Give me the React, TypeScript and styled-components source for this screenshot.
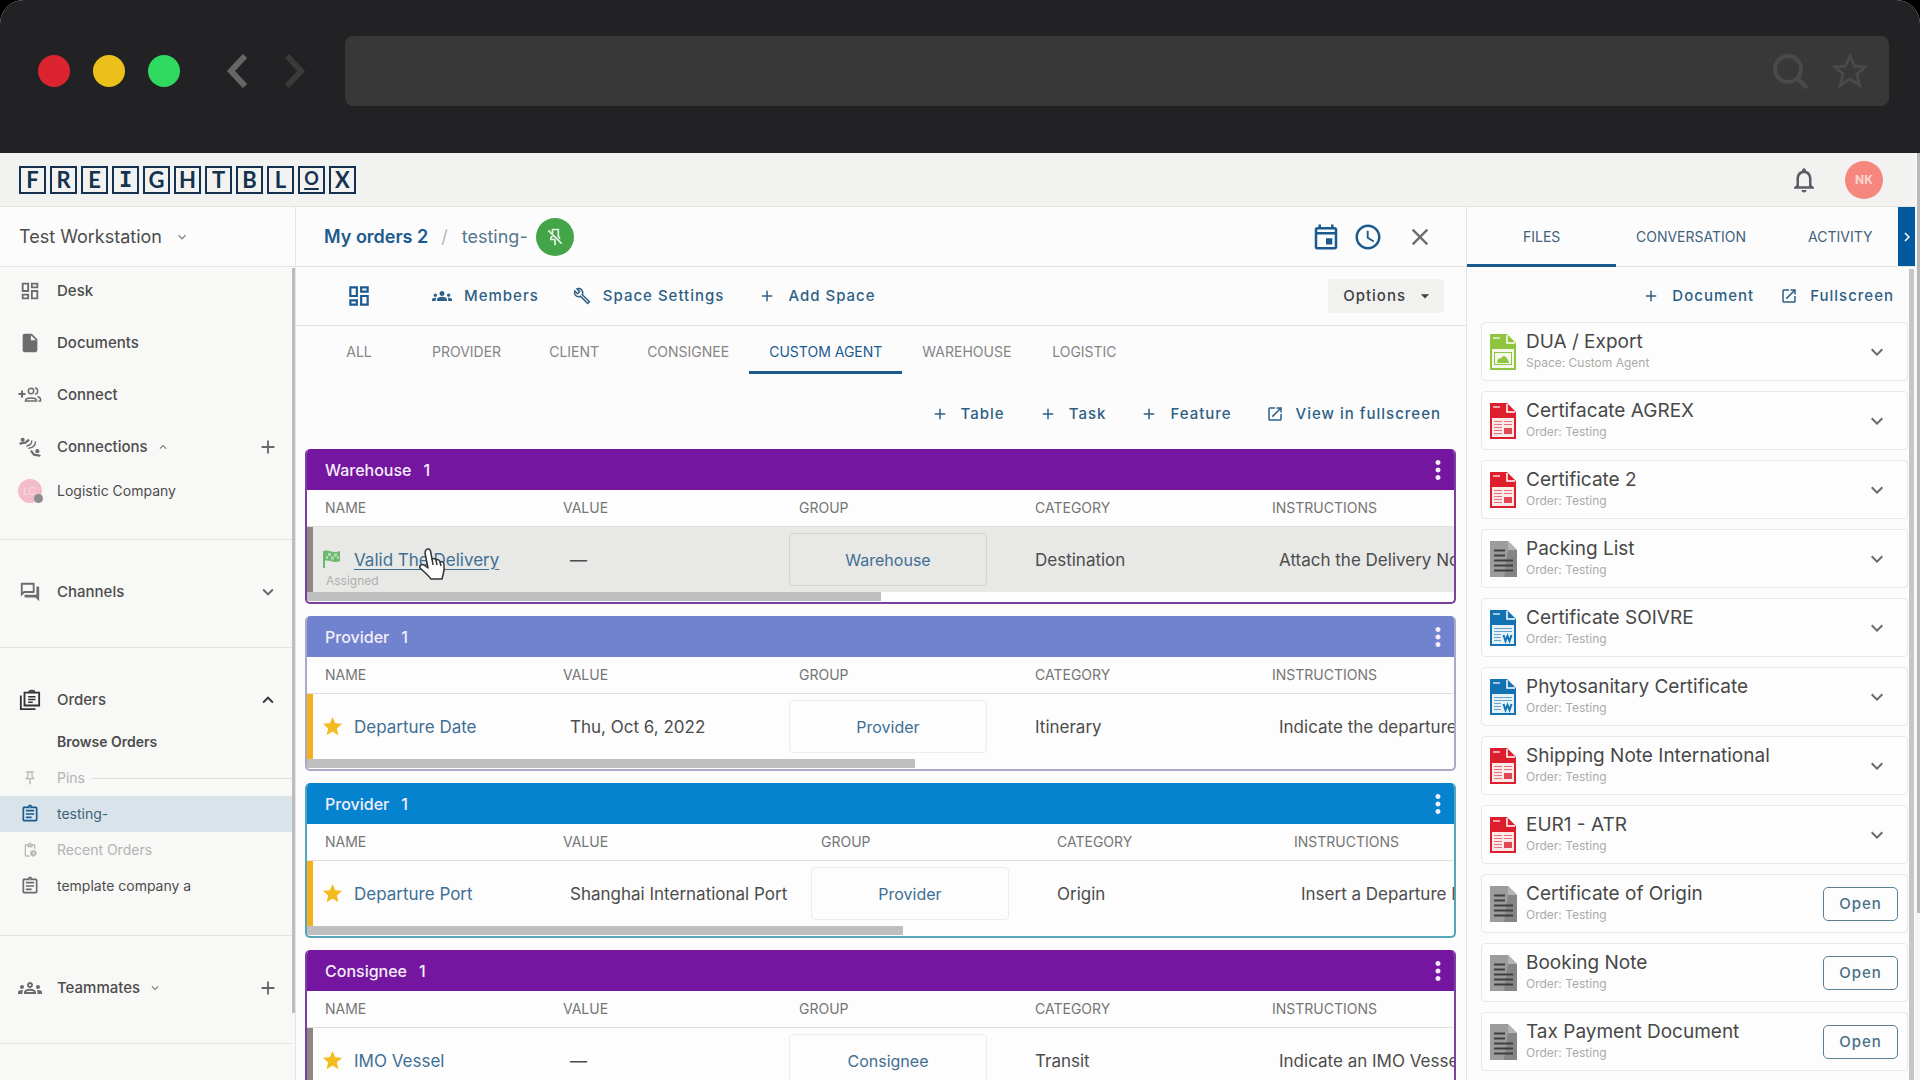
import React from "react";
import styled, { createGlobalStyle, css } from "styled-components";
import {
  MdAccessTime,
  MdAdd,
  MdArrowDropDown,
  MdClose,
  MdExpandLess,
  MdExpandMore,
  MdChevronRight,
  MdGroups,
  MdInsertDriveFile,
  MdMoreVert,
  MdOpenInNew,
  MdOutlineAssignment,
  MdOutlineBuild,
  MdOutlineDashboard,
  MdOutlineEvent,
  MdOutlineForum,
  MdOutlineGroups,
  MdOutlineNotifications,
  MdOutlinePendingActions,
  MdOutlinePushPin,
  MdStar,
} from "react-icons/md";

const blue = "#1a5a8e";
const navy = "#14324f";
const ink = "#4c4c4c";
const line = "#e4e4e0";

const Global = createGlobalStyle`
  *, *::before, *::after { box-sizing: border-box; }
  body {
    margin: 0;
    background: #000;
    color: ${ink};
    font-family: Inter, Roboto, "Liberation Sans", sans-serif;
    font-size: 14px;
    line-height: 20px;
  }
  button { font: inherit; color: inherit; background: none; border: 0; padding: 0; cursor: pointer; }
  a { color: inherit; text-decoration: none; }
  svg { display: block; flex: none; }
`;

const Window = styled.div`
  height: 100vh;
  display: flex;
  flex-direction: column;
  overflow: hidden;
  border-radius: 24px 24px 0 0;
  background: #fcfcfc;
`;

const Chrome = styled.div`
  flex: none;
  display: flex;
  align-items: center;
  height: 153px;
  padding: 0 31px 11px 38px;
  background: #222225;
`;

const Lights = styled.div`
  display: flex;
  gap: 23px;
`;

const Light = styled.span<{ $color: string }>`
  width: 32px;
  height: 32px;
  border-radius: 50%;
  background: ${(p) => p.$color};
`;

const History = styled.div`
  display: flex;
  gap: 36px;
  margin: 0 39px 0 46px;
`;

const AddressBar = styled.div`
  flex: 1;
  display: flex;
  align-items: center;
  height: 70px;
  padding-right: 20px;
  border-radius: 8px;
  background: #383838;
`;

const Address = styled.input`
  flex: 1;
  height: 100%;
  padding: 0 20px;
  border: 0;
  outline: 0;
  background: none;
  color: #bbb;
  font: inherit;
`;

const AddressIcons = styled.div`
  display: flex;
  gap: 22px;
  color: #4b4a48;
`;

const Viewport = styled.div`
  flex: 1;
  min-height: 0;
  display: flex;
`;

const Page = styled.div`
  flex: 1;
  min-width: 0;
  display: flex;
  flex-direction: column;
`;

const PageScroll = styled.div`
  flex: none;
  width: 5px;
  padding-left: 2px;
  background: #f6f6f6;
`;

const PageThumb = styled.div`
  height: 82%;
  background: #b9b9b9;
`;

const TopBar = styled.header`
  flex: none;
  display: flex;
  align-items: center;
  justify-content: space-between;
  height: 54px;
  padding: 0 32px 0 19px;
  background: #f2f2f1;
  border-bottom: 1px solid ${line};
`;

const Logo = styled.a`
  display: flex;
  gap: 4px;
`;

const LogoTile = styled.span<{ $slab?: boolean; $ring?: boolean }>`
  display: flex;
  align-items: center;
  justify-content: center;
  width: 27px;
  height: 28px;
  border: 2px solid ${navy};
  color: ${navy};
  font-family: ${(p) => (p.$slab ? '"DejaVu Sans Mono", monospace' : "Lato, sans-serif")};
  font-weight: 700;
  font-size: 22px;
  line-height: 24px;
  ${(p) =>
    p.$ring &&
    css`
      align-items: flex-start;
      font-size: 18px;
      line-height: 20px;
      text-decoration: underline;
      text-decoration-thickness: 2px;
      text-underline-offset: 3px;
    `}
`;

const TopActions = styled.div`
  display: flex;
  align-items: center;
  gap: 26px;
`;

const Avatar = styled.span`
  display: flex;
  align-items: center;
  justify-content: center;
  width: 38px;
  height: 38px;
  border-radius: 50%;
  background: #f5877f;
  color: #fbd5d0;
  font-size: 12px;
  font-weight: 700;
`;

const Columns = styled.div`
  flex: 1;
  min-height: 0;
  display: flex;
`;

const Sidebar = styled.nav`
  flex: none;
  width: 296px;
  display: flex;
  flex-direction: column;
  border-right: 1px solid ${line};
`;

const Workspace = styled.button`
  flex: none;
  display: flex;
  align-items: center;
  gap: 12px;
  height: 60px;
  padding: 0 20px 0 19px;
  border-bottom: 1px solid ${line};
  font-size: 18px;
  line-height: 24px;
`;

const SideBody = styled.div`
  flex: 1;
  min-height: 0;
  display: flex;
  background: #f8f8f7;
`;

const SideList = styled.div`
  flex: 1;
  display: flex;
  flex-direction: column;
`;

const SideThumb = styled.div`
  flex: none;
  width: 3px;
  height: 745px;
  margin-top: 1px;
  background: #bdbdbd;
`;

const Section = styled.section<{ $first?: boolean }>`
  display: flex;
  flex-direction: column;
  gap: ${(p) => (p.$first ? "4px" : "0")};
  padding: ${(p) => (p.$first ? "0 0 32px" : "28px 0 31px")};
  border-bottom: 1px solid ${line};
`;

const SideRow = styled.div<{ $tall?: boolean; $short?: boolean; $active?: boolean; $muted?: boolean }>`
  display: flex;
  align-items: center;
  height: ${(p) => (p.$tall ? "48px" : p.$short ? "32px" : "36px")};
  padding-right: 13px;
  background: ${(p) => (p.$active ? "#d9e4ea" : "none")};
  color: ${(p) => (p.$active ? "#3c6478" : p.$muted ? "#b3b3b1" : ink)};
`;

const SideIcon = styled.span`
  flex: none;
  display: flex;
  justify-content: center;
  width: 57px;
  padding-left: 2px;
  color: #6b6b6b;
  ${SideRow}[data-tone="active"] & { color: ${blue}; }
  ${SideRow}[data-tone="muted"] & { color: #b9b9b7; }
  ${SideRow}[data-tone="dark"] & { color: #333; }
`;

const SideLink = styled.a<{ $weight?: number; $size?: number }>`
  font-size: ${(p) => p.$size ?? 14}px;
  font-weight: ${(p) => p.$weight ?? 400};
`;

const SideCaret = styled.span`
  margin-left: 8px;
  color: #777;
`;

const SideButton = styled.button`
  margin-left: auto;
  color: #666;
`;

const Rule = styled.span`
  flex: 1;
  height: 1px;
  margin: 0 -13px 0 6px;
  background: #dfdfdc;
`;

const CompanyMark = styled.span`
  position: relative;
  width: 24px;
  height: 24px;
  border-radius: 50%;
  background: #f3bcc8;
  color: #f7dbe2;
  font-size: 10px;
  line-height: 24px;
  text-align: center;
  &::after {
    content: "";
    position: absolute;
    right: -1px;
    bottom: 0;
    width: 9px;
    height: 9px;
    border-radius: 50%;
    background: #8d8d8d;
  }
`;

const Main = styled.main`
  flex: 1;
  min-width: 0;
  display: flex;
  flex-direction: column;
`;

const Crumbs = styled.div`
  flex: none;
  display: flex;
  align-items: center;
  height: 60px;
  padding: 0 32px 0 28px;
  border-bottom: 1px solid ${line};
  font-size: 18px;
  line-height: 24px;
  color: #57778f;
`;

const CrumbHome = styled.a`
  font-weight: 600;
  color: ${blue};
`;

const Slash = styled.span`
  margin: 0 14px 0 13px;
  color: #b5b5b5;
`;

const PinButton = styled.button`
  display: flex;
  align-items: center;
  justify-content: center;
  width: 38px;
  height: 38px;
  margin-left: 8px;
  border-radius: 50%;
  background: #43a548;
`;

const CrumbActions = styled.div`
  display: flex;
  align-items: center;
  gap: 12px;
  margin-left: auto;
  color: ${blue};
`;

const CloseButton = styled.button`
  margin-left: 11px;
  color: #6d6d6d;
`;

const Toolbar = styled.div`
  flex: none;
  display: flex;
  align-items: center;
  gap: 34px;
  height: 59px;
  padding: 0 22px 0 50px;
  border-bottom: 1px solid ${line};
`;

const HomeButton = styled.button`
  margin-right: 26px;
  color: ${blue};
`;

const TextButton = styled.button`
  display: flex;
  align-items: center;
  gap: 12px;
  color: #2e5f85;
  font-size: 15px;
  font-weight: 500;
  letter-spacing: 1px;
  white-space: nowrap;
`;

const OptionsButton = styled.button`
  display: flex;
  align-items: center;
  gap: 9px;
  height: 34px;
  margin-left: auto;
  padding: 0 9px 0 15px;
  border-radius: 4px;
  background: #f1f1ef;
  font-size: 15px;
  font-weight: 500;
  letter-spacing: 1px;
  color: #3f3f3f;
`;

const Tabs = styled.div`
  flex: none;
  display: flex;
  padding-left: 10px;
`;

const Tab = styled.button<{ $on?: boolean }>`
  min-width: 106px;
  height: 48px;
  padding: 6px 20px 0;
  border-bottom: 3px solid ${(p) => (p.$on ? blue : "transparent")};
  color: ${(p) => (p.$on ? blue : "#858585")};
`;

const Actions = styled.div`
  flex: none;
  display: flex;
  justify-content: flex-end;
  gap: 34px;
  padding: 30px 25px 25px;
`;

const Cards = styled.div`
  flex: 1;
  min-height: 0;
  overflow: hidden;
  display: flex;
  flex-direction: column;
  gap: 12px;
  padding: 0 10px 0 9px;
`;

const Card = styled.section<{ $edge: string }>`
  flex: none;
  border: 2px solid ${(p) => p.$edge};
  border-top: 0;
  border-radius: 5px;
  overflow: hidden;
  background: #fdfdfd;
`;

const CardHead = styled.div<{ $color: string }>`
  display: flex;
  align-items: center;
  height: 41px;
  margin: 0 -2px;
  padding: 0 3px 0 20px;
  background: ${(p) => p.$color};
  color: #f4eefa;
`;

const CardTitle = styled.h2`
  margin: 0 12px 0 0;
  font-size: 16px;
  font-weight: 500;
`;

const CardCount = styled.span`
  font-size: 16px;
  font-weight: 500;
`;

const MoreButton = styled.button`
  margin-left: auto;
`;

const TableClip = styled.div`
  overflow: hidden;
`;

const Table = styled.table`
  table-layout: fixed;
  width: 200%;
  border-collapse: separate;
  border-spacing: 0;
`;

const Col = styled.col<{ $w?: number }>`
  width: ${(p) => (p.$w ? `${p.$w}px` : "auto")};
`;

const Th = styled.th`
  height: 37px;
  padding: 0 18px;
  border-bottom: 1px solid #dededb;
  color: #757575;
  font-weight: 400;
  text-align: left;
`;

const Td = styled.td<{ $inset?: boolean }>`
  height: 65px;
  padding: 0 0 0 ${(p) => (p.$inset ? 25 : 18)}px;
  font-size: 17px;
  white-space: nowrap;
`;

const BodyRow = styled.tr<{ $hover?: boolean }>`
  background: ${(p) => (p.$hover ? "#e8e8e6" : "none")};
`;

const NameTd = styled.td<{ $strip: string }>`
  position: relative;
  height: 65px;
  padding: 0 0 0 8px;
  border-left: 6px solid ${(p) => p.$strip};
  font-size: 17px;
`;

const NameGrid = styled.div`
  height: 65px;
  display: grid;
  grid-template-rows: 1fr auto 1fr;
`;

const NameLine = styled.div`
  grid-row: 2;
  display: flex;
  align-items: center;
  gap: 10px;
`;

const NameLink = styled.a<{ $under?: boolean }>`
  color: #3f6f94;
  white-space: nowrap;
  text-decoration: ${(p) => (p.$under ? "underline" : "none")};
  text-underline-offset: 3px;
`;

const Note = styled.span`
  grid-row: 3;
  padding-left: 5px;
  font-size: 12px;
  line-height: 20px;
  color: #b0b0ae;
`;

const Hand = styled.svg`
  position: absolute;
  left: 104px;
  top: 20px;
`;

const GroupBox = styled.div<{ $hover?: boolean }>`
  display: flex;
  align-items: center;
  justify-content: center;
  width: 198px;
  height: 53px;
  margin-left: -10px;
  border: 1px solid ${(p) => (p.$hover ? "#d3d3d0" : "#ededea")};
  border-radius: 4px;
  font-size: 16px;
  color: #3f6f94;
`;

const Track = styled.div`
  height: 10px;
`;

const Thumb = styled.div`
  height: 9px;
  background: #bfbfbf;
`;

const Files = styled.aside`
  flex: none;
  width: 449px;
  display: flex;
  flex-direction: column;
  border-left: 1px solid ${line};
`;

const FileTabs = styled.div`
  position: relative;
  flex: none;
  display: flex;
  height: 60px;
  border-bottom: 1px solid ${line};
`;

const FileTab = styled.button<{ $on?: boolean }>`
  flex: 1 1 0;
  padding-top: 2px;
  margin-bottom: -1px;
  border-bottom: 3px solid ${(p) => (p.$on ? blue : "transparent")};
  color: #42627c;
`;

const Collapse = styled.button`
  position: absolute;
  right: 0;
  top: 0;
  display: flex;
  align-items: center;
  justify-content: center;
  width: 17px;
  height: 59px;
  background: #015a9f;
  color: #fff;
`;

const FileBody = styled.div`
  flex: 1;
  min-height: 0;
  display: flex;
`;

const FileScroll = styled.div`
  flex: none;
  width: 5px;
  margin: 2px 1px 0 0;
  background: #c6c6c6;
`;

const FileMain = styled.div`
  flex: 1;
  min-width: 0;
  overflow: hidden;
`;

const FileActions = styled.div`
  display: flex;
  justify-content: flex-end;
  gap: 26px;
  padding: 19px 15px 16px;
`;

const FileList = styled.ul`
  display: flex;
  flex-direction: column;
  gap: 10px;
  margin: 0;
  padding: 0 1px 0 14px;
  list-style: none;
`;

const FileRow = styled.li`
  flex: none;
  display: flex;
  align-items: center;
  gap: 9px;
  height: 59px;
  padding: 0 9px 0 8px;
  border: 1px solid #e8e8e4;
  border-radius: 4px;
  background: #fdfdfd;
`;

const FileText = styled.div`
  flex: 1;
  min-width: 0;
  padding-bottom: 2px;
`;

const FileName = styled.div`
  font-size: 19px;
  line-height: 24px;
  color: #484848;
`;

const FileSub = styled.div`
  font-size: 12px;
  line-height: 18px;
  color: #ababa9;
`;

const ExpandButton = styled.button`
  margin-right: 9px;
  color: #6a6a6a;
`;

const OpenButton = styled.button`
  width: 75px;
  height: 34px;
  border: 1px solid #5a7f95;
  border-radius: 5px;
  color: #4a6f88;
  font-size: 15px;
  font-weight: 500;
  letter-spacing: 1px;
`;

type Kind = "pdf" | "doc" | "img" | "text";

const kindColor: Record<Kind, string> = {
  pdf: "#dd1f2d",
  doc: "#1272b4",
  img: "#8fc43f",
  text: "#777",
};

function FileIcon({ kind }: { kind: Kind }) {
  const c = kindColor[kind];
  if (kind === "text") {
    return (
      <svg width="27" height="36" viewBox="0 0 27 36" aria-hidden="true">
        <path d="M0 0H18L27 9V36H0Z" fill="#9c9c9c" />
        <path d="M18 9H27V36H14Z" fill="#858585" />
        <path d="M18 0L27 9H18Z" fill="#b4b4b4" />
        <path d="M4 9.500H15M4 14.500H15M4 19.500H23M4 24.500H23M4 29.500H23" stroke="#3f3f3f" strokeWidth="2" />
      </svg>
    );
  }
  return (
    <svg width="27" height="36" viewBox="0 0 27 36" aria-hidden="true">
      <path d="M0 0H17L26 9V36H0Z" fill={c} />
      <path d="M17 1V9H25" fill="none" stroke="#fff" strokeWidth="1.500" />
      <path d="M3 4H10" stroke="#fff" strokeWidth="2" opacity="0.6" />
      <rect x="2" y="15" width="22" height="19" fill="#fff" opacity="0.9" />
      {kind === "img" && (
        <g>
          <rect x="4.500" y="18.500" width="17" height="12" fill="none" stroke={c} />
          <path d="M7 29C8 22 11 26 13 22C16 22 18 25 19 29Z" fill={c} />
        </g>
      )}
      {kind === "pdf" && (
        <g stroke={c} opacity="0.8">
          <path d="M4 18.500H12M4 21.500H12M4 24.500H12M4 27.500H12M4 30.500H12M14 18.500H22M14 21.500H22" opacity="0.75" />
          <rect x="14.500" y="25.500" width="7" height="5" fill={c} />
        </g>
      )}
      {kind === "doc" && (
        <g stroke={c} fill="none">
          <path d="M4 18.500H22M4 21.500H22M4 24.500H11M4 27.500H11M4 30.500H11" opacity="0.6" />
          <path d="M13.500 25L15.500 31L17.500 26L19.500 31L21.500 25" strokeWidth="2" />
        </g>
      )}
    </svg>
  );
}

function ConnectIcon() {
  return (
    <svg width="24" height="24" viewBox="0 0 24 24" fill="none" stroke="currentColor" strokeWidth="1.500" aria-hidden="true">
      <path d="M4 7.500V14.500M0.500 11H7.500" strokeWidth="2" />
      <circle cx="13" cy="8" r="2.700" />
      <path d="M7.500 17.500C7.500 14 18.500 14 18.500 17.500V18H7.500Z" />
      <path d="M17 5C20.500 4.500 20.500 11.500 17 11M19.500 13.500C22 14.200 23 15.500 22.500 18H20.500" />
    </svg>
  );
}

function ConnectionIcon() {
  return (
    <svg width="22" height="22" viewBox="0 0 24 24" fill="none" stroke="currentColor" aria-hidden="true">
      <circle cx="4" cy="4" r="2.200" fill="currentColor" stroke="none" />
      <path d="M1 9C3 6 6 9 8 6.500L11 4" strokeWidth="2.500" />
      <circle cx="20" cy="16.500" r="2.200" fill="currentColor" stroke="none" />
      <path d="M23 22C21 19.500 18 22 16 20L13 16" strokeWidth="2.500" />
      <path d="M14 5C14 9 12 10 8 11M18 6C18 11 15 13 10 13.500" strokeWidth="1.500" />
    </svg>
  );
}

function OrdersIcon() {
  return (
    <svg width="22" height="22" viewBox="0 0 24 24" fill="none" stroke="currentColor" strokeWidth="2" aria-hidden="true">
      <path d="M6 4H22V18H6Z" />
      <path d="M2 7V22H18" />
      <path d="M11 4C11 1 17 1 17 4" />
      <path d="M10 8.500H18M10 11.500H18M10 14.500H15" strokeWidth="1.500" />
    </svg>
  );
}

function PinOffIcon() {
  return (
    <svg width="20" height="20" viewBox="0 0 24 24" fill="none" stroke="#e6f4e6" strokeWidth="2" aria-hidden="true">
      <path d="M8 3H17M9 3V8M16 3V11L18 14M12 15H7V13L9 11M12 15V22" />
      <path d="M4 4L20 20" />
    </svg>
  );
}

function RaceFlag() {
  return (
    <svg width="23" height="23" viewBox="0 0 23 23" aria-hidden="true">
      <path d="M3 3V20" stroke="#6dba6f" strokeWidth="2" />
      <path d="M3 3C8 1 11 6 19 3V13C12 16 9 11 3 13Z" fill="#6dba6f" />
      <path d="M7 5H10V8H7ZM13 5.500H16V8.500H13ZM10 8.500H13V11.500H10ZM16 8.500H18V11H16ZM5 8H7V11H5Z" fill="#b4dab3" />
    </svg>
  );
}

function HandCursor() {
  return (
    <Hand width="30" height="36" viewBox="0 0 30 36" aria-hidden="true">
      <path
        d="M9 3C11 1 13 2 13.500 4L15 12C17 11 18.500 12 19 13C21 12 22.500 13 23 15C25 14 27 15 27 18C28 24 26 27 25 32H14C11 28 6 24 3 21C2 18 5 17 7 18L11 21L8 6C8 5 8 4 9 3Z"
        fill="#fdfdfd"
        stroke="#333"
        strokeWidth="1.500"
        strokeLinejoin="round"
      />
      <path d="M15 12L16 18M19 13L20 18M23 15L24 19" stroke="#333" strokeWidth="1.500" fill="none" />
    </Hand>
  );
}

const cards = [
  {
    title: "Warehouse", color: "#74169f", edge: "#7b3fa0", strip: "#8f8583", name: "Valid The Delivery", value: "—",
    group: "Warehouse", category: "Destination", instructions: "Attach the Delivery No", thumb: 50, hover: true, valueCol: 236,
  },
  {
    title: "Provider", color: "#7183cf", edge: "#a9a9c9", strip: "#f5b01c", name: "Departure Date", value: "Thu, Oct 6, 2022",
    group: "Provider", category: "Itinerary", instructions: "Indicate the departure", thumb: 53, valueCol: 236,
  },
  {
    title: "Provider", color: "#0683cf", edge: "#56a5b8", strip: "#f5b01c", name: "Departure Port", value: "Shanghai International Port",
    group: "Provider", category: "Origin", instructions: "Insert a Departure P", thumb: 52, valueCol: 258,
  },
  {
    title: "Consignee", color: "#74169f", edge: "#7b3fa0", strip: "#8f8583", name: "IMO Vessel", value: "—",
    group: "Consignee", category: "Transit", instructions: "Indicate an IMO Vesse", thumb: 50, valueCol: 236,
  },
];

const files: { name: string; sub?: string; kind: Kind; open?: boolean }[] = [
  { name: "DUA / Export", sub: "Space: Custom Agent", kind: "img" },
  { name: "Certifacate AGREX", kind: "pdf" },
  { name: "Certificate 2", kind: "pdf" },
  { name: "Packing List", kind: "text" },
  { name: "Certificate SOIVRE", kind: "doc" },
  { name: "Phytosanitary Certificate", kind: "doc" },
  { name: "Shipping Note International", kind: "pdf" },
  { name: "EUR1 - ATR", kind: "pdf" },
  { name: "Certificate of Origin", kind: "text", open: true },
  { name: "Booking Note", kind: "text", open: true },
  { name: "Tax Payment Document", kind: "text", open: true },
];

const tabs = ["ALL", "PROVIDER", "CLIENT", "CONSIGNEE", "CUSTOM AGENT", "WAREHOUSE", "LOGISTIC"];

export default function App() {
  return (
    <>
      <Global />
      <Window>
        <Chrome>
          <Lights>
            <Light $color="#dc2430" />
            <Light $color="#ecc01a" />
            <Light $color="#30d95f" />
          </Lights>
          <History>
            <button aria-label="Back">
              <svg width="22" height="34" viewBox="0 0 22 34" fill="none" stroke="#666" strokeWidth="6">
                <path d="M19 2L5 17L19 32" />
              </svg>
            </button>
            <button aria-label="Forward">
              <svg width="22" height="34" viewBox="0 0 22 34" fill="none" stroke="#3a3a3a" strokeWidth="6">
                <path d="M3 2L17 17L3 32" />
              </svg>
            </button>
          </History>
          <AddressBar>
            <Address type="text" aria-label="Address" />
            <AddressIcons>
              <svg width="38" height="38" viewBox="0 0 38 38" fill="none" stroke="currentColor" strokeWidth="4">
                <circle cx="17" cy="17" r="13" />
                <path d="M26 26L36 36" />
              </svg>
              <svg width="38" height="38" viewBox="0 0 38 38" fill="none" stroke="currentColor" strokeWidth="3">
                <path d="M19 4L23.500 14L34 15L26 22L28.500 33L19 27L9.500 33L12 22L4 15L14.500 14Z" />
              </svg>
            </AddressIcons>
          </AddressBar>
        </Chrome>

        <Viewport>
          <Page>
            <TopBar>
              <Logo href="#" aria-label="Freightblox">
                {"FREIGHTBLOX".split("").map((c, i) => (
                  <LogoTile key={i} $slab={c === "I"} $ring={c === "O"}>{c}</LogoTile>
                ))}
              </Logo>
              <TopActions>
                <button aria-label="Notifications"><MdOutlineNotifications size={30} color="#5c5c66" /></button>
                <Avatar>NK</Avatar>
              </TopActions>
            </TopBar>

            <Columns>
              <Sidebar>
                <Workspace>Test Workstation <MdExpandMore size={16} color="#888" /></Workspace>
                <SideBody>
                  <SideList>
                    <Section $first>
                      <SideRow $tall>
                        <SideIcon><MdOutlineDashboard size={22} /></SideIcon>
                        <SideLink href="#" $size={15} $weight={500}>Desk</SideLink>
                      </SideRow>
                      <SideRow $tall>
                        <SideIcon><MdInsertDriveFile size={22} /></SideIcon>
                        <SideLink href="#" $size={15} $weight={500}>Documents</SideLink>
                      </SideRow>
                      <SideRow $tall>
                        <SideIcon><ConnectIcon /></SideIcon>
                        <SideLink href="#" $size={15} $weight={500}>Connect</SideLink>
                      </SideRow>
                      <SideRow $tall>
                        <SideIcon><ConnectionIcon /></SideIcon>
                        <SideLink href="#" $size={15} $weight={500}>Connections</SideLink>
                        <SideCaret><MdExpandLess size={14} /></SideCaret>
                        <SideButton aria-label="Add connection"><MdAdd size={22} /></SideButton>
                      </SideRow>
                      <SideRow $short>
                        <SideIcon><CompanyMark>LC</CompanyMark></SideIcon>
                        <SideLink href="#">Logistic Company</SideLink>
                      </SideRow>
                    </Section>
                    <Section>
                      <SideRow $tall>
                        <SideIcon><MdOutlineForum size={22} /></SideIcon>
                        <SideLink href="#" $size={15} $weight={500}>Channels</SideLink>
                        <SideButton aria-label="Expand channels"><MdExpandMore size={22} /></SideButton>
                      </SideRow>
                    </Section>
                    <Section>
                      <SideRow $tall data-tone="dark">
                        <SideIcon><OrdersIcon /></SideIcon>
                        <SideLink href="#" $size={15} $weight={500}>Orders</SideLink>
                        <SideButton aria-label="Collapse orders"><MdExpandLess size={22} color="#333" /></SideButton>
                      </SideRow>
                      <SideRow>
                        <SideIcon />
                        <SideLink href="#" $weight={600}>Browse Orders</SideLink>
                      </SideRow>
                      <SideRow $muted data-tone="muted">
                        <SideIcon><MdOutlinePushPin size={16} /></SideIcon>
                        <SideLink as="span">Pins</SideLink>
                        <Rule />
                      </SideRow>
                      <SideRow $active data-tone="active">
                        <SideIcon><MdOutlineAssignment size={20} /></SideIcon>
                        <SideLink href="#">testing-</SideLink>
                      </SideRow>
                      <SideRow $muted data-tone="muted">
                        <SideIcon><MdOutlinePendingActions size={16} /></SideIcon>
                        <SideLink as="span">Recent Orders</SideLink>
                      </SideRow>
                      <SideRow>
                        <SideIcon><MdOutlineAssignment size={20} /></SideIcon>
                        <SideLink href="#">template company a</SideLink>
                      </SideRow>
                    </Section>
                    <Section>
                      <SideRow $tall>
                        <SideIcon><MdOutlineGroups size={24} /></SideIcon>
                        <SideLink href="#" $size={15} $weight={500}>Teammates</SideLink>
                        <SideCaret><MdExpandMore size={14} /></SideCaret>
                        <SideButton aria-label="Add teammate"><MdAdd size={22} /></SideButton>
                      </SideRow>
                    </Section>
                  </SideList>
                  <SideThumb />
                </SideBody>
              </Sidebar>

              <Main>
                <Crumbs>
                  <CrumbHome href="#">My orders 2</CrumbHome>
                  <Slash>/</Slash>
                  <span>testing-</span>
                  <PinButton aria-label="Unpin"><PinOffIcon /></PinButton>
                  <CrumbActions>
                    <button aria-label="Calendar"><MdOutlineEvent size={30} /></button>
                    <button aria-label="History"><MdAccessTime size={30} /></button>
                    <CloseButton aria-label="Close"><MdClose size={28} /></CloseButton>
                  </CrumbActions>
                </Crumbs>
                <Toolbar>
                  <HomeButton aria-label="Dashboard"><MdOutlineDashboard size={26} /></HomeButton>
                  <TextButton><MdGroups size={20} />Members</TextButton>
                  <TextButton><MdOutlineBuild size={18} />Space Settings</TextButton>
                  <TextButton><MdAdd size={18} />Add Space</TextButton>
                  <OptionsButton>Options <MdArrowDropDown size={20} /></OptionsButton>
                </Toolbar>
                <Tabs>
                  {tabs.map((t) => (
                    <Tab key={t} $on={t === "CUSTOM AGENT"}>{t}</Tab>
                  ))}
                </Tabs>
                <Actions>
                  <TextButton><MdAdd size={18} />Table</TextButton>
                  <TextButton><MdAdd size={18} />Task</TextButton>
                  <TextButton><MdAdd size={18} />Feature</TextButton>
                  <TextButton><MdOpenInNew size={18} />View in fullscreen</TextButton>
                </Actions>
                <Cards>
                  {cards.map((c, i) => (
                    <Card key={i} $edge={c.edge}>
                      <CardHead $color={c.color}>
                        <CardTitle>{c.title}</CardTitle>
                        <CardCount>1</CardCount>
                        <MoreButton aria-label="More"><MdMoreVert size={30} /></MoreButton>
                      </CardHead>
                      <TableClip>
                        <Table>
                          <colgroup>
                            <Col $w={238} /><Col $w={c.valueCol} /><Col $w={236} /><Col $w={237} /><Col />
                          </colgroup>
                          <thead>
                            <tr>
                              <Th>NAME</Th><Th>VALUE</Th><Th>GROUP</Th><Th>CATEGORY</Th><Th>INSTRUCTIONS</Th>
                            </tr>
                          </thead>
                          <tbody>
                            <BodyRow $hover={c.hover}>
                              <NameTd $strip={c.strip}>
                                <NameGrid>
                                  <NameLine>
                                    {c.hover ? <RaceFlag /> : <MdStar size={23} color="#f3bb1d" />}
                                    <NameLink href="#" $under={c.hover}>{c.name}</NameLink>
                                  </NameLine>
                                  {c.hover && <Note>Assigned</Note>}
                                </NameGrid>
                                {c.hover && <HandCursor />}
                              </NameTd>
                              <Td $inset>{c.value}</Td>
                              <Td><GroupBox $hover={c.hover}>{c.group}</GroupBox></Td>
                              <Td>{c.category}</Td>
                              <Td $inset>{c.instructions}</Td>
                            </BodyRow>
                          </tbody>
                        </Table>
                      </TableClip>
                      <Track><Thumb style={{ width: `${c.thumb}%` }} /></Track>
                    </Card>
                  ))}
                </Cards>
              </Main>

              <Files>
                <FileTabs>
                  <FileTab $on>FILES</FileTab>
                  <FileTab>CONVERSATION</FileTab>
                  <FileTab>ACTIVITY</FileTab>
                  <Collapse aria-label="Collapse panel"><MdChevronRight size={18} /></Collapse>
                </FileTabs>
                <FileBody>
                  <FileMain>
                    <FileActions>
                      <TextButton><MdAdd size={18} />Document</TextButton>
                      <TextButton><MdOpenInNew size={18} />Fullscreen</TextButton>
                    </FileActions>
                    <FileList>
                      {files.map((f) => (
                        <FileRow key={f.name}>
                          <FileIcon kind={f.kind} />
                          <FileText>
                            <FileName>{f.name}</FileName>
                            <FileSub>{f.sub ?? "Order: Testing"}</FileSub>
                          </FileText>
                          {f.open ? (
                            <OpenButton>Open</OpenButton>
                          ) : (
                            <ExpandButton aria-label={`Expand ${f.name}`}><MdExpandMore size={24} /></ExpandButton>
                          )}
                        </FileRow>
                      ))}
                    </FileList>
                  </FileMain>
                  <FileScroll />
                </FileBody>
              </Files>
            </Columns>
          </Page>
          <PageScroll><PageThumb /></PageScroll>
        </Viewport>
      </Window>
    </>
  );
}
